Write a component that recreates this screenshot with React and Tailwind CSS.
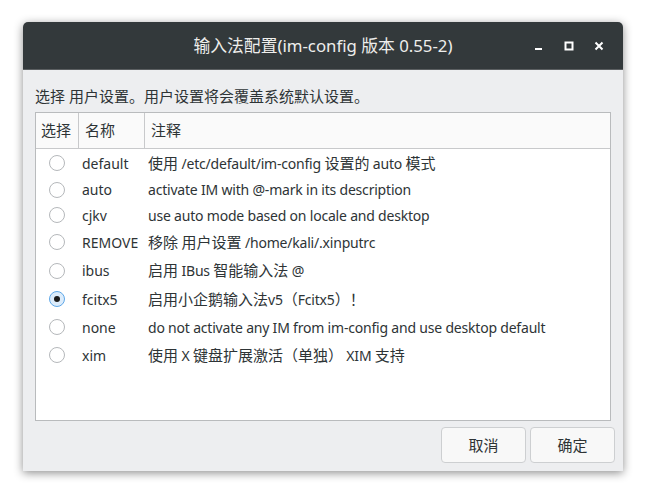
import React from 'react';

const font = { fontFamily: '"Noto Sans", "Noto Sans CJK SC", sans-serif' };

const rows = [
  { name: 'default', note: '使用 /etc/default/im-config 设置的 auto 模式', h: 'h-[28px]' },
  { name: 'auto', note: 'activate IM with @-mark in its description', h: 'h-[25px]' },
  { name: 'cjkv', note: 'use auto mode based on locale and desktop', h: 'h-[26px]' },
  { name: 'REMOVE', note: '移除 用户设置 /home/kali/.xinputrc', h: 'h-[28px]' },
  { name: 'ibus', note: '启用 IBus 智能输入法 @', h: 'h-[29px]' },
  { name: 'fcitx5', note: '启用小企鹅输入法v5（Fcitx5）！', h: 'h-[28px]', checked: true },
  { name: 'none', note: 'do not activate any IM from im-config and use desktop default', h: 'h-[28px]' },
  { name: 'xim', note: '使用 X 键盘扩展激活（单独） XIM 支持', h: 'h-[28px]' },
];

// CJK glyphs render a bit larger than latin in the original
function Mixed({ text }) {
  const parts = text.split(/([\u3000-\u303f\u4e00-\u9fff\uff00-\uffef]+)/);
  return parts.map((p, i) =>
    i % 2 === 1 ? (
      <span key={i} className="text-[15px]">{p}</span>
    ) : (
      <span key={i} className="tracking-[-0.2px]">{p}</span>
    )
  );
}

function Radio({ checked }) {
  if (checked) {
    return (
      <span className="w-[16px] h-[16px] rounded-full border border-[#5fa8e8] bg-[#dcecfb] flex items-center justify-center">
        <span className="w-[6px] h-[6px] rounded-full bg-[#1b1b1b]" />
      </span>
    );
  }
  return <span className="w-[16px] h-[16px] rounded-full border border-[#b5b8bb] bg-white" />;
}

export default function App() {
  return (
    <div className="w-[646px] h-[494px] bg-white pt-[22px] pl-[23px]" style={font}>
      <div className="w-[600px] h-[449px] rounded-t-[5px] overflow-hidden flex flex-col shadow-[0_2px_10px_rgba(0,0,0,0.45)]">
        <div className="h-[48px] bg-[#33393b] border-b border-[#5b5f61] flex items-center relative">
          <div className="flex-1 text-center text-[16.8px] text-[#eeeeec]">输入法配置(im-config 版本 0.55-2)</div>
          <div className="absolute right-0 top-0 h-full flex items-center gap-[14px] pr-[16px] text-white">
            <svg width="16" height="16" viewBox="0 0 16 16"><rect x="4" y="10" width="7" height="2" fill="#ffffff" /></svg>
            <svg width="16" height="16" viewBox="0 0 16 16"><rect x="4.5" y="4.5" width="7" height="7" fill="none" stroke="#ffffff" strokeWidth="2" /></svg>
            <svg width="16" height="16" viewBox="0 0 16 16"><path d="M4.5 4.5 L11.5 11.5 M11.5 4.5 L4.5 11.5" stroke="#ffffff" strokeWidth="2" /></svg>
          </div>
        </div>
        <div className="flex-1 bg-[#edeef0] px-[12px] flex flex-col">
          <div className="h-[42px] flex items-center text-[15px] text-[#2e3436] pt-[11px]">选择 用户设置。用户设置将会覆盖系统默认设置。</div>
          <div className="h-[309px] border border-[#b9bbbd] bg-white flex flex-col">
            <div className="h-[36px] flex bg-[#fafafa] border-b border-[#c8c9cb] text-[15px] text-[#2e3436]">
              <div className="w-[43px] border-r border-[#c8c9cb] flex items-center pl-[5px]">选择</div>
              <div className="w-[66px] border-r border-[#c8c9cb] flex items-center pl-[6px]">名称</div>
              <div className="flex-1 flex items-center pl-[6px]">注释</div>
            </div>
            {rows.map((r) => (
              <div key={r.name} className={`${r.h} flex items-center text-[14px] text-[#2e3436]`}>
                <div className="w-[43px] flex justify-center pr-[1px]">
                  <Radio checked={r.checked} />
                </div>
                <div className="w-[66px] pl-[3px]">{r.name}</div>
                <div className="flex-1 pl-[3px] whitespace-nowrap">
                  <Mixed text={r.note} />
                </div>
              </div>
            ))}
          </div>
          <div className="flex justify-end gap-[4px] pt-[6px] mr-[-4px]">
            <button className="w-[85px] h-[36px] rounded-[4px] border border-[#cdcfd1] bg-[#f8f8f8] text-[15px] text-[#2e3436]">取消</button>
            <button className="w-[85px] h-[36px] rounded-[4px] border border-[#cdcfd1] bg-[#f8f8f8] text-[15px] text-[#2e3436]">确定</button>
          </div>
        </div>
      </div>
    </div>
  );
}
